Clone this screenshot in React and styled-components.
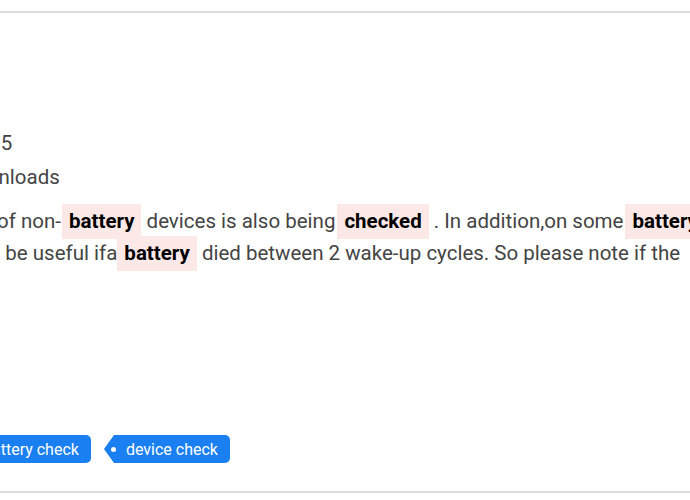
import React from "react";
import styled, { createGlobalStyle } from "styled-components";

const Global = createGlobalStyle`
  html, body { margin: 0; padding: 0; background: #fff; overflow: hidden; }
  body { width: 690px; height: 500px; font-family: Roboto, "Noto Sans", sans-serif; }
`;

const Post = styled.div`
  margin-top: 11px;
  height: 482px;
  border-top: 2px solid #dcdcdc;
  border-bottom: 2px solid #dcdcdc;
  box-sizing: border-box;
  display: flex;
  flex-direction: column;
  overflow: hidden;
`;

const Body = styled.div`
  margin-left: -50px;
  padding-top: 113px;
  display: flex;
  flex-direction: column;
  color: #444;
  font-size: 20.5px;
  white-space: nowrap;
`;

const Line = styled.div`
  line-height: 34px;
  margin-left: ${(p) => p.$indent || 0}px;
`;

const Para = styled.div`
  margin-top: 11px;
  line-height: 32px;
`;

const ParaLine = styled.div`
  margin-left: ${(p) => p.$indent || 0}px;
`;

const Mark = styled.span`
  background: #fce9e7;
  color: #000;
  font-weight: 700;
  padding: 5px 7px 6px;
  margin-left: ${(p) => p.$ml || 0}px;
`;

const Tags = styled.div`
  margin-top: auto;
  margin-bottom: 28px;
  margin-left: -39px;
  display: flex;
  gap: 13px;
`;

const Tag = styled.span`
  position: relative;
  display: inline-flex;
  align-items: center;
  height: 28px;
  padding: 0 12px 0 12px;
  margin-left: 10px;
  background: #1a7ff0;
  color: #fff;
  font-size: 16px;
  border-radius: 0 5px 5px 0;
  &::before {
    content: "";
    position: absolute;
    left: -10px;
    top: 0;
    border-style: solid;
    border-width: 14px 10px 14px 0;
    border-color: transparent #1a7ff0 transparent transparent;
  }
  &::after {
    content: "";
    position: absolute;
    left: -3px;
    top: 11.5px;
    width: 5px;
    height: 5px;
    border-radius: 50%;
    background: #fff;
  }
`;

export default function App() {
  return (
    <>
      <Global />
      <Post>
        <Body>
          <Line>1.0.0.5</Line>
          <Line $indent={8}>Downloads</Line>
          <Para>
            <ParaLine $indent={-4}>
              state of non-<Mark $ml={1}>battery</Mark> devices is also being<Mark $ml={2}>checked</Mark> . In addition,on some<Mark $ml={2}>battery</Mark> devices
            </ParaLine>
            <ParaLine>
              could be useful ifa<Mark>battery</Mark> died between 2 wake-up cycles. So please note if the
            </ParaLine>
          </Para>
        </Body>
        <Tags>
          <Tag>battery check</Tag>
          <Tag>device check</Tag>
        </Tags>
      </Post>
    </>
  );
}
